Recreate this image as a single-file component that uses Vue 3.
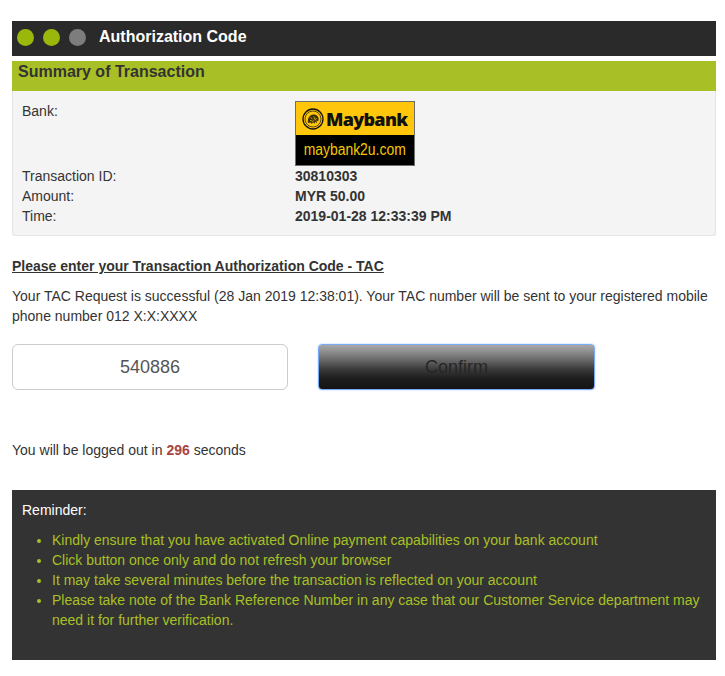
<script setup>
const rows = [
  { label: 'Transaction ID:', value: '30810303' },
  { label: 'Amount:', value: 'MYR 50.00' },
  { label: 'Time:', value: '2019-01-28 12:33:39 PM' }
]
const tips = [
  'Kindly ensure that you have activated Online payment capabilities on your bank account',
  'Click button once only and do not refresh your browser',
  'It may take several minutes before the transaction is reflected on your account',
  'Please take note of the Bank Reference Number in any case that our Customer Service department may need it for further verification.'
]
</script>

<template>
  <div class="page">
    <header class="titlebar">
      <span class="dot green"></span>
      <span class="dot green"></span>
      <span class="dot grey"></span>
      <h1>Authorization Code</h1>
    </header>

    <h2 class="summary-title">Summary of Transaction</h2>
    <section class="summary">
      <div class="row bank-row">
        <span class="label">Bank:</span>
        <div class="logo">
          <div class="logo-top">
            <svg class="emblem" viewBox="0 0 22 22" width="22" height="22">
              <circle cx="11" cy="11" r="10" fill="none" stroke="#111" stroke-width="1.3" />
              <circle cx="11" cy="11" r="8" fill="none" stroke="#111" stroke-width="0.7" />
              <path d="M6 15c-.6-3 .2-6 2.400-7.600 2-1.400 5-1.300 6.800.4 1.500 1.400 1.800 3.600 1 5.400l-1.600-.6.2 2.600-1.800-1.400-.4 2-1.600-1.600-1.200 1.800-1.200-1.600z" fill="#3a3008" />
              <path d="M8.500 9.500l2 1.500M12 8.500l.5 3M14.500 10l-1.500 2.500M8 12.500l2.500.5M10.500 14l1-1.500" stroke="#ffc60b" stroke-width=".7" fill="none" />
            </svg>
            <span class="logo-name">Maybank</span>
          </div>
          <div class="logo-bottom"><span>maybank2u.com</span></div>
        </div>
      </div>
      <div v-for="r in rows" :key="r.label" class="row">
        <span class="label">{{ r.label }}</span>
        <strong class="value">{{ r.value }}</strong>
      </div>
    </section>

    <h3 class="prompt">Please enter your Transaction Authorization Code - TAC</h3>
    <p class="notice">
      Your TAC Request is successful (28 Jan 2019 12:38:01). Your TAC number will be sent to your registered mobile phone number 012 X:X:XXXX
    </p>

    <div class="form">
      <input class="tac" type="text" value="540886" />
      <button class="confirm" type="button">Confirm</button>
    </div>

    <p class="logout">You will be logged out in <b>296</b> seconds</p>

    <section class="reminder">
      <p>Reminder:</p>
      <ul>
        <li v-for="t in tips" :key="t">{{ t }}</li>
      </ul>
    </section>
  </div>
</template>

<style>
html, body { background: #fff; }
</style>

<style scoped>
.page {
  width: 704px;
  padding: 21px 9px 16px 12px;
  font-family: "Liberation Sans", Arial, sans-serif;
  font-size: 14px;
  line-height: 20px;
  color: #333;
}
.titlebar {
  box-sizing: border-box;
  height: 35px;
  background: #2a2a2a;
  display: flex;
  align-items: center;
  padding: 0 0 3px 5px;
}
.dot { width: 17px; height: 17px; border-radius: 50%; margin-right: 9px; }
.dot.green { background: #9ab80c; }
.dot.grey { background: #7d7d7d; }
.titlebar h1 {
  margin: 0 0 0 4px;
  font-size: 16px;
  font-weight: 700;
  color: #fff;
}
.summary-title {
  margin: 5px 0 0;
  height: 30px;
  background: #a8c026;
  padding-left: 6px;
  font-size: 16px;
  line-height: 21px;
  font-weight: 700;
  color: #333;
}
.summary {
  box-sizing: border-box;
  height: 145px;
  background: #f4f4f4;
  border: 1px solid #e4e4e4;
  border-top: 0;
  border-radius: 0 0 3px 3px;
  padding: 10px 0 0 9px;
}
.row {
  display: grid;
  grid-template-columns: 273px 1fr;
  height: 20px;
}
.bank-row { height: 65px; }
.label { color: #333; }
.value { font-weight: 700; color: #333; }
.logo {
  box-sizing: border-box;
  width: 120px;
  height: 65px;
  border: 1px solid #6e6e6e;
  display: flex;
  flex-direction: column;
}
.logo-top {
  height: 33px;
  background: #ffc60b;
  display: flex;
  align-items: center;
  padding-left: 6px;
  gap: 2px;
}
.logo-name {
  font-family: "Open Sans", "DejaVu Sans", sans-serif;
  font-weight: 800;
  font-size: 18px;
  letter-spacing: -.7px;
  color: #111;
  line-height: 20px;
}
.logo-bottom {
  flex: 1;
  background: #000;
  color: #f5c800;
  font-size: 16px;
  text-align: center;
  line-height: 30px;
  overflow: hidden;
}
.logo-bottom span {
  display: inline-block;
  transform: scaleX(.87);
  white-space: nowrap;
}
.prompt {
  margin: 20px 0 0;
  font-size: 14px;
  line-height: 20px;
  font-weight: 700;
  text-decoration: underline;
  color: #333;
}
.notice { margin: 10px 0 0; }
.form {
  display: flex;
  gap: 30px;
  margin-top: 18px;
  align-items: flex-start;
}
.tac {
  box-sizing: border-box;
  width: 276px;
  height: 46px;
  border: 1px solid #ccc;
  border-radius: 6px;
  background: #fff;
  font-family: inherit;
  font-size: 18px;
  color: #555;
  text-align: center;
  padding: 0;
  outline: none;
}
.confirm {
  box-sizing: border-box;
  width: 277px;
  height: 46px;
  border: 1px solid #7baaf7;
  border-radius: 4px;
  box-shadow: 0 0 2px #a9c8fb;
  background: linear-gradient(#a8a8a8 0%, #8e8e8e 15%, #666 35%, #3a3a3a 55%, #1f1f1f 75%, #141414 100%);
  font-family: inherit;
  font-size: 18px;
  color: #262626;
  padding: 0;
}
.logout { margin: 50px 0 0; }
.logout b { color: #a94442; }
.reminder {
  margin-top: 30px;
  height: 170px;
  box-sizing: border-box;
  background: #333;
  padding: 10px 10px 0;
  color: #fff;
}
.reminder p { margin: 0; }
.reminder ul {
  margin: 10px 0 0;
  padding-left: 30px;
  color: #a8c026;
}
</style>
